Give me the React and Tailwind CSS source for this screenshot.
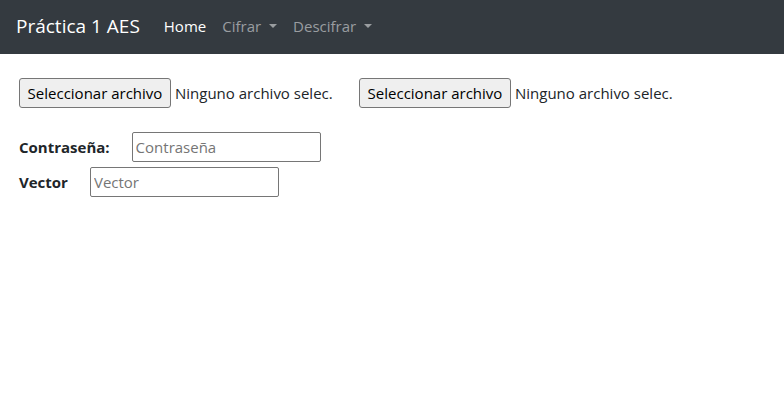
import { useRef, useState } from "react";

function Caret() {
  return (
    <span
      aria-hidden="true"
      className="ml-2 border-x-4 border-t-4 border-x-transparent border-t-current"
    />
  );
}

function NavMenu({ label }) {
  return (
    <button type="button" aria-haspopup="menu" className="flex items-center text-[#9a9da0]">
      {label}
      <Caret />
    </button>
  );
}

function FilePicker({ name }) {
  const input = useRef(null);
  const [fileName, setFileName] = useState("Ninguno archivo selec.");
  return (
    <div className="flex items-center gap-1">
      <input
        ref={input}
        type="file"
        name={name}
        aria-label="Seleccionar archivo"
        className="hidden"
        onChange={(e) => setFileName(e.target.files[0]?.name ?? "Ninguno archivo selec.")}
      />
      <button
        type="button"
        onClick={() => input.current.click()}
        className="h-[30px] w-[152px] rounded-[3px] border border-[#767676] bg-[#efefef] whitespace-nowrap text-black"
      >
        Seleccionar archivo
      </button>
      <span className="w-40 whitespace-nowrap">{fileName}</span>
    </div>
  );
}

function Field({ id, label, placeholder }) {
  return (
    <div className="flex items-center gap-[22px]">
      <label htmlFor={id} className="font-bold">
        {label}
      </label>
      <input
        id={id}
        type="text"
        placeholder={placeholder}
        className="h-[30px] w-[189px] rounded-[2px] border border-[#767676] bg-white px-[3px] placeholder:text-[#757575]"
      />
    </div>
  );
}

export default function App() {
  return (
    <div className="min-h-screen bg-white font-['Open_Sans',sans-serif] text-[15px] leading-6 text-[#212529]">
      <nav className="flex h-[54px] items-center gap-6 bg-[#343a40] px-4 pb-[2px]">
        <a href="#" className="text-[19px] text-white">
          Práctica 1 AES
        </a>
        <div className="flex items-center gap-4">
          <a href="#" aria-current="page" className="text-white">
            Home
          </a>
          <NavMenu label="Cifrar" />
          <NavMenu label="Descifrar" />
        </div>
      </nav>
      <main className="px-[19px] py-6">
        <div className="flex flex-wrap gap-6">
          <FilePicker name="archivo" />
          <FilePicker name="destino" />
        </div>
        <form className="mt-6 flex flex-col gap-[5px]">
          <Field id="contrasena" label="Contraseña:" placeholder="Contraseña" />
          <Field id="vector" label="Vector" placeholder="Vector" />
        </form>
      </main>
    </div>
  );
}
